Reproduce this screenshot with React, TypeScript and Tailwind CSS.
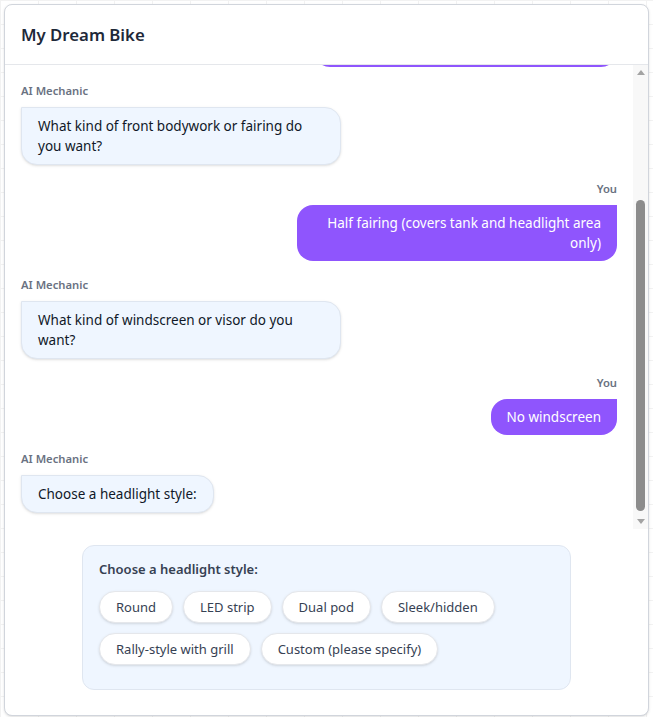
import { useLayoutEffect, useRef } from "react";

type Msg = { from: "ai" | "user"; text: string };

const MESSAGES: Msg[] = [
  { from: "ai", text: "What overall style are you going for with your bike build?" },
  { from: "user", text: "Naked streetfighter with aggressive stance" },
  { from: "ai", text: "What kind of front bodywork or fairing do you want?" },
  { from: "user", text: "Half fairing (covers tank and headlight area only)" },
  { from: "ai", text: "What kind of windscreen or visor do you want?" },
  { from: "user", text: "No windscreen" },
  { from: "ai", text: "Choose a headlight style:" },
];

const OPTIONS = [
  "Round",
  "LED strip",
  "Dual pod",
  "Sleek/hidden",
  "Rally-style with grill",
  "Custom (please specify)",
];

function Bubble({ msg }: { msg: Msg }) {
  if (msg.from === "user") {
    return (
      <div className="flex flex-col items-end">
        <div className="mb-2 text-[11.25px] leading-4 font-semibold text-gray-500">You</div>
        <div className="max-w-xs rounded-2xl rounded-tr-none bg-[#8f55fd] px-4 py-2 text-right text-[13.5px] leading-5 text-white">
          {msg.text}
        </div>
      </div>
    );
  }
  return (
    <div className="flex flex-col items-start">
      <div className="mb-2 text-[11.25px] leading-4 font-semibold text-gray-500">AI Mechanic</div>
      <div className="max-w-xs rounded-2xl rounded-tl-none border border-[#dfe6f0] bg-[#eff6ff] px-4 py-2 text-[13.5px] leading-5 text-gray-900 shadow-sm">
        {msg.text}
      </div>
    </div>
  );
}

// drawn scrollbar, the native one is hidden in the headless browser
function ScrollBar() {
  return (
    <div className="flex w-[15px] shrink-0 flex-col items-center bg-[#f8f8f8]">
      <div className="flex h-[15px] items-center justify-center">
        <div className="h-0 w-0 border-x-[4px] border-b-[5px] border-x-transparent border-b-[#a3a3a3]" />
      </div>
      <div className="flex flex-1 flex-col justify-end pb-[3px]">
        <div className="h-[311px] w-[9px] rounded-full bg-[#8c8c8c]" />
      </div>
      <div className="flex h-[15px] items-center justify-center">
        <div className="h-0 w-0 border-x-[4px] border-t-[5px] border-x-transparent border-t-[#a3a3a3]" />
      </div>
    </div>
  );
}

export default function App() {
  const listRef = useRef<HTMLDivElement>(null);

  useLayoutEffect(() => {
    const el = listRef.current;
    if (el) el.scrollTop = el.scrollHeight;
  }, []);

  return (
    <div className="min-h-screen bg-white bg-[linear-gradient(#f2f2f2_1px,transparent_1px),linear-gradient(90deg,#f2f2f2_1px,transparent_1px)] bg-[size:38px_24px] p-1 font-['Noto_Sans',sans-serif]">
      <div className="flex h-[712px] flex-col overflow-hidden rounded-lg border border-gray-300 bg-white shadow-sm">
        <div className="flex h-[60px] shrink-0 items-center border-b border-gray-200 px-4">
          <h1 className="text-[16.75px] font-semibold text-gray-800">My Dream Bike</h1>
        </div>

        <div className="flex min-h-0 flex-1">
          <div ref={listRef} className="min-w-0 flex-1 overflow-hidden p-4">
            <div className="flex flex-col gap-4">
              {MESSAGES.map((m, i) => (
                <Bubble key={i} msg={m} />
              ))}
            </div>
          </div>
          <ScrollBar />
        </div>

        <div className="shrink-0 px-4 pt-4 pb-[25px]">
          <div className="mx-auto w-[489px] rounded-xl border border-[#dfe6f0] bg-[#eff6ff] px-4 pt-[13px] pb-6">
            <div className="mb-3 text-[13px] leading-5 font-semibold text-gray-700">
              Choose a headlight style:
            </div>
            <div className="flex flex-wrap gap-2.5">
              {OPTIONS.map((o) => (
                <button
                  key={o}
                  className="rounded-full border border-gray-200 bg-white px-4 py-[5px] text-[13px] leading-5 text-gray-700 shadow-sm"
                >
                  {o}
                </button>
              ))}
            </div>
          </div>
        </div>
      </div>
    </div>
  );
}
